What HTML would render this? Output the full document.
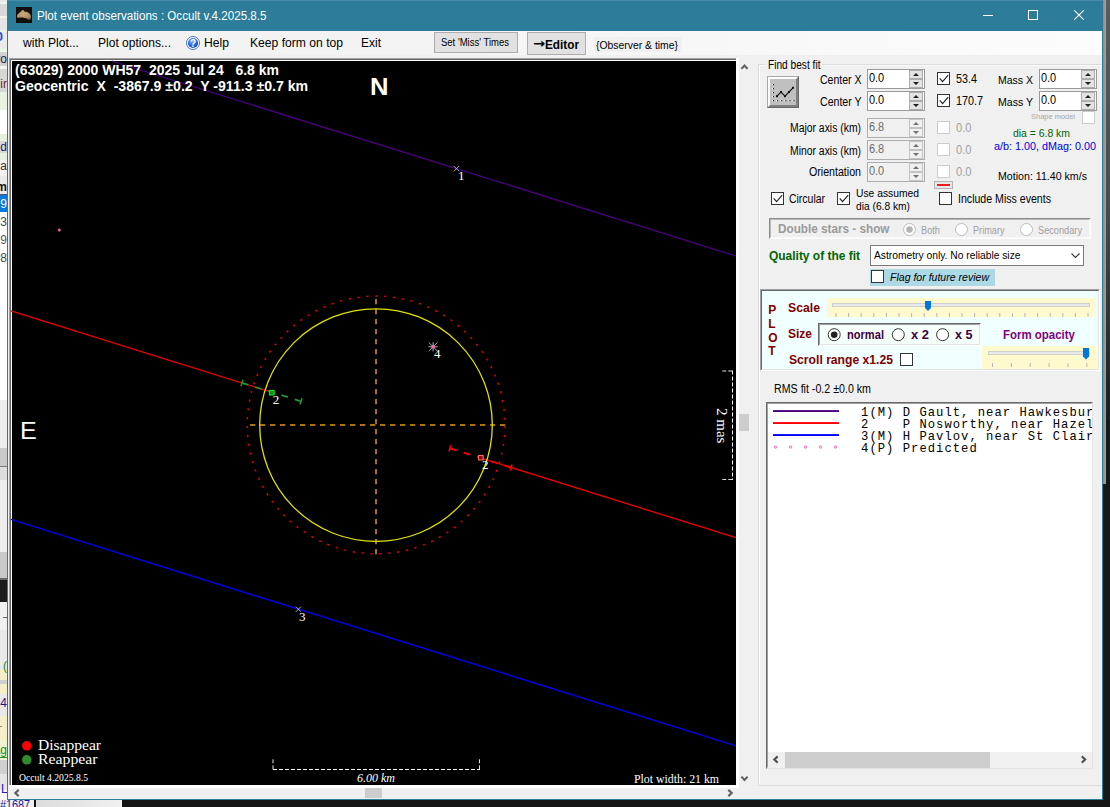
<!DOCTYPE html>
<html><head><meta charset="utf-8"><title>Plot event observations : Occult v.4.2025.8.5</title>
<style>
html,body{margin:0;padding:0;}
body{width:1110px;height:807px;overflow:hidden;background:#161616;position:relative;font-family:"Liberation Sans",Arial,sans-serif;}
div,span,svg{box-sizing:border-box;}
svg{position:absolute;overflow:visible;}
</style></head><body>
<div style="position:absolute;left:1103px;top:0px;width:7px;height:807px;background:#181818;"></div>
<div style="position:absolute;left:1103px;top:0px;width:3px;height:484px;background:linear-gradient(90deg,#8e8a8a,#a6a2a2);"></div>
<div style="position:absolute;left:1106px;top:0px;width:4px;height:420px;background:linear-gradient(180deg,#5c5c5c 0,#4a4a4a 50%,#1c1c1c 100%);"></div>
<div style="position:absolute;left:0px;top:800px;width:1110px;height:7px;background:#141414;"></div>
<div style="position:absolute;left:0;top:0;width:7px;height:800px;overflow:hidden;background:#ececec;">
<div style="position:absolute;left:0px;top:0px;width:7px;height:2px;background:#e8e8e8;"></div>
<div style="position:absolute;left:0px;top:2px;width:7px;height:2px;background:#eef6ea;"></div>
<div style="position:absolute;left:0px;top:4px;width:7px;height:12px;background:#d9d9d9;"></div>
<div style="position:absolute;left:0px;top:16px;width:7px;height:2px;background:#eef6ea;"></div>
<div style="position:absolute;left:0px;top:18px;width:7px;height:12px;background:#e4e4e4;"></div>
<div style="position:absolute;left:0px;top:30px;width:7px;height:2px;background:#e6f2e2;"></div>
<div style="position:absolute;left:0px;top:32px;width:7px;height:16px;background:#e9e9e9;"></div>
<div style="position:absolute;left:0px;top:48px;width:7px;height:2px;background:#e6f2e2;"></div>
<div style="position:absolute;left:0px;top:50px;width:7px;height:2px;background:#f4f4f4;"></div>
<div style="position:absolute;left:0px;top:52px;width:7px;height:14px;background:#d2d2d2;"></div>
<div style="position:absolute;left:0px;top:66px;width:7px;height:3px;background:#f2f6ee;"></div>
<div style="position:absolute;left:0px;top:69px;width:7px;height:23px;background:#d6d6d6;"></div>
<div style="position:absolute;left:0px;top:92px;width:7px;height:18px;background:#e9f1e3;"></div>
<div style="position:absolute;left:0px;top:110px;width:7px;height:24px;background:#ffffff;"></div>
<div style="position:absolute;left:0px;top:134px;width:7px;height:7px;background:#e6f0e0;"></div>
<div style="position:absolute;left:0px;top:141px;width:7px;height:12px;background:#d8d8d8;"></div>
<div style="position:absolute;left:0px;top:153px;width:7px;height:7px;background:#e6f0e0;"></div>
<div style="position:absolute;left:0px;top:160px;width:7px;height:16px;background:#f2f2f2;"></div>
<div style="position:absolute;left:0px;top:176px;width:7px;height:18px;background:#e9e9e9;"></div>
<div style="position:absolute;left:0px;top:194px;width:7px;height:1px;background:#555;"></div>
<div style="position:absolute;left:0px;top:195px;width:7px;height:17px;background:#0a78d7;"></div>
<div style="position:absolute;left:0px;top:212px;width:7px;height:188px;background:#ffffff;"></div>
<div style="position:absolute;left:0px;top:400px;width:7px;height:48px;background:#ededed;"></div>
<div style="position:absolute;left:0px;top:448px;width:7px;height:18px;background:#c9c9c9;"></div>
<div style="position:absolute;left:0px;top:466px;width:7px;height:1px;background:#7a7a7a;"></div>
<div style="position:absolute;left:0px;top:467px;width:7px;height:13px;background:#dedede;"></div>
<div style="position:absolute;left:0px;top:480px;width:7px;height:72px;background:#ededed;"></div>
<div style="position:absolute;left:0px;top:552px;width:7px;height:26px;background:#c9c9c9;"></div>
<div style="position:absolute;left:0px;top:578px;width:7px;height:2px;background:#6a6a6a;"></div>
<div style="position:absolute;left:0px;top:580px;width:7px;height:22px;background:#1c1c1c;"></div>
<div style="position:absolute;left:0px;top:602px;width:7px;height:28px;background:#f0f0f0;"></div>
<div style="position:absolute;left:0px;top:630px;width:7px;height:40px;background:#e9e9e9;"></div>
<div style="position:absolute;left:0px;top:670px;width:7px;height:10px;background:#f4efc6;"></div>
<div style="position:absolute;left:0px;top:680px;width:7px;height:4px;background:#cfcfcf;"></div>
<div style="position:absolute;left:0px;top:684px;width:7px;height:10px;background:#f4efc6;"></div>
<div style="position:absolute;left:0px;top:694px;width:7px;height:22px;background:#e8e8e8;"></div>
<div style="position:absolute;left:0px;top:716px;width:7px;height:24px;background:#f4efc6;"></div>
<div style="position:absolute;left:0px;top:740px;width:7px;height:20px;background:#eef2cf;"></div>
<div style="position:absolute;left:0px;top:760px;width:7px;height:14px;background:#cfcfcf;"></div>
<div style="position:absolute;left:0px;top:774px;width:7px;height:16px;background:#e4e4e4;"></div>
<div style="position:absolute;left:0px;top:790px;width:7px;height:10px;background:#fbfbfb;"></div>
<div style="position:absolute;left:3px;top:617px;width:4px;height:1px;background:#666;"></div>
<div style="position:absolute;left:0px;top:726px;width:2px;height:1px;background:#888;"></div>
<div style="position:absolute;left:0px;top:757px;width:7px;height:1px;background:#2e8b2e;"></div>
<span style="position:absolute;right:4px;top:29px;font:bold 13px/16px 'Liberation Sans', Arial, sans-serif;color:#1a4fd0;">0</span>
<span style="position:absolute;right:0;top:51px;font:normal 12px/16px 'Liberation Sans', Arial, sans-serif;color:#1a1a40;white-space:pre;">ro</span>
<span style="position:absolute;right:0;top:76px;font:normal 12px/16px 'Liberation Sans', Arial, sans-serif;color:#7a2a10;white-space:pre;">ir</span>
<span style="position:absolute;right:0;top:139px;font:normal 12px/16px 'Liberation Sans', Arial, sans-serif;color:#1a1a70;white-space:pre;">d</span>
<span style="position:absolute;right:0;top:158px;font:normal 12px/16px 'Liberation Sans', Arial, sans-serif;color:#4a2a10;white-space:pre;">a</span>
<span style="position:absolute;right:0;top:179px;font:bold 12px/16px 'Liberation Sans', Arial, sans-serif;color:#111;white-space:pre;">m</span>
<span style="position:absolute;right:0;top:196px;font:normal 12px/16px 'Liberation Sans', Arial, sans-serif;color:#fff;white-space:pre;">9</span>
<span style="position:absolute;right:0;top:214px;font:normal 12px/16px 'Liberation Sans', Arial, sans-serif;color:#444;white-space:pre;">33</span>
<span style="position:absolute;right:0;top:232px;font:normal 12px/16px 'Liberation Sans', Arial, sans-serif;color:#555;white-space:pre;">9</span>
<span style="position:absolute;right:0;top:250px;font:normal 12px/16px 'Liberation Sans', Arial, sans-serif;color:#444;white-space:pre;">98</span>
<span style="position:absolute;right:0;top:695px;font:normal 12px/16px 'Liberation Sans', Arial, sans-serif;color:#1a1a70;white-space:pre;">4</span>
<span style="position:absolute;right:0;top:742px;font:normal 12px/16px 'Liberation Sans', Arial, sans-serif;color:#1e8a1e;white-space:pre;">ag</span>
<span style="position:absolute;right:0;top:658px;font:normal 12px/16px 'Liberation Sans', Arial, sans-serif;color:#1e8a1e;white-space:pre;">(</span>
<span style="position:absolute;left:1px;top:782px;font:12px/14px 'Liberation Sans', Arial, sans-serif;color:#2020b0;">L</span>
</div>
<div style="position:absolute;left:0px;top:800px;width:122px;height:7px;background:linear-gradient(90deg,#f0f0f0 0,#f0f0f0 36px,#dcdcdc 37px,#f0f0f0 100%);"></div>
<div style="position:absolute;left:34px;top:800px;width:2px;height:7px;background:#111;"></div>
<span id="t1" style="position:absolute;left:0px;top:797.3px;font:normal 13px/16px 'Liberation Sans', Arial, sans-serif;color:#1a1a9a;white-space:pre;transform:scaleX(0.8297);transform-origin:0 0;">#1687</span>
<div style="position:absolute;left:7px;top:0px;width:1096px;height:800px;background:#f0f0f0;border:1px solid #2c7c9a;"></div>
<div style="position:absolute;left:7px;top:0px;width:1096px;height:31px;background:#2c7c9a;border-top:1px solid #468ba6;"></div>
<svg style="left:16px;top:7px" width="16" height="16" viewBox="0 0 16 16"><defs><radialGradient id="ag" cx=".45" cy=".4" r=".65"><stop offset="0" stop-color="#c9aa7c"/><stop offset=".7" stop-color="#b09066"/><stop offset="1" stop-color="#7a6244"/></radialGradient></defs><rect width="16" height="16" fill="#130e09"/><path d="M0.8 9.3 C1.2 8 1.8 7.2 2.5 6.6 C3.2 5.6 4 4.9 4.9 4.4 C5.5 3.6 6.2 3 6.8 3 C7.4 3 7.9 3.3 8.2 3.8 C8.5 4.2 8.7 4.8 9 5.2 C9.7 4.8 10.5 4.7 11.2 5 C12.1 5.3 12.8 5.9 13.4 6.6 C14.2 7.4 14.8 8.3 15 9.3 C15.2 10.1 15.1 10.9 14.8 11.5 C14.6 12.2 14.2 12.7 13.7 12.8 C13 12.9 12.3 12.7 11.7 12.3 C11.1 11.9 10.6 11.5 10.1 11.2 C9.5 10.9 8.8 10.9 8.2 10.9 C7.4 10.7 6.5 10.5 5.7 10.5 C4.8 10.5 3.9 10.7 3 10.8 C2.4 10.8 1.8 10.7 1.4 10.4 C1 10.1 0.8 9.7 0.8 9.3Z" fill="url(#ag)"/></svg>
<span id="title" style="position:absolute;left:37px;top:9.0px;font:normal 12px/15px 'Liberation Sans', Arial, sans-serif;color:#fff;white-space:pre;transform:scaleX(0.9673);transform-origin:0 0;">Plot event observations : Occult v.4.2025.8.5</span>
<svg style="left:975px;top:1px" width="128" height="30" viewBox="975 1 128 30" fill="none" stroke="#fff" stroke-width="1"><path d="M983 15.5H993"/><rect x="1028.5" y="10.5" width="9" height="9"/><path d="M1074.3 10.3L1083.7 19.7M1083.7 10.3L1074.3 19.7" stroke-width="1.1"/></svg>
<div style="position:absolute;left:8px;top:31px;width:1094px;height:24px;background:linear-gradient(90deg,#f1f1f1 0%,#f4f4f4 40%,#fcfcfc 100%);"></div>
<span id="m1" style="position:absolute;left:23px;top:35.5px;font:normal 12px/15px 'Liberation Sans', Arial, sans-serif;color:#000;white-space:pre;transform:scaleX(1.0116);transform-origin:0 0;">with Plot...</span>
<span id="m2" style="position:absolute;left:98px;top:35.5px;font:normal 12px/15px 'Liberation Sans', Arial, sans-serif;color:#000;white-space:pre;transform:scaleX(1.0039);transform-origin:0 0;">Plot options...</span>
<svg style="left:186px;top:36px" width="14" height="14" viewBox="0 0 14 14"><defs><radialGradient id="hg" cx=".4" cy=".3" r=".8"><stop offset="0" stop-color="#7fb0ff"/><stop offset=".6" stop-color="#2a62d8"/><stop offset="1" stop-color="#1a3fa0"/></radialGradient></defs><circle cx="7" cy="7" r="6.5" fill="#fff" stroke="#4a74d0" stroke-width="1"/><circle cx="7" cy="7" r="5.1" fill="url(#hg)"/><text x="7" y="10.6" text-anchor="middle" font-family="Liberation Sans,Arial,sans-serif" font-weight="bold" font-size="10" fill="#fff">?</text></svg>
<span id="m3" style="position:absolute;left:204px;top:35.5px;font:normal 12px/15px 'Liberation Sans', Arial, sans-serif;color:#000;white-space:pre;transform:scaleX(1.0127);transform-origin:0 0;">Help</span>
<span id="m4" style="position:absolute;left:250px;top:35.5px;font:normal 12px/15px 'Liberation Sans', Arial, sans-serif;color:#000;white-space:pre;transform:scaleX(1.0102);transform-origin:0 0;">Keep form on top</span>
<span id="m5" style="position:absolute;left:361px;top:35.5px;font:normal 12px/15px 'Liberation Sans', Arial, sans-serif;color:#000;white-space:pre;transform:scaleX(0.9992);transform-origin:0 0;">Exit</span>
<div style="position:absolute;left:434px;top:32px;width:84px;height:21px;background:#e1e1e1;border:1px solid #adadad;"></div>
<span id="b1" style="position:absolute;left:441px;top:36.5px;font:normal 10px/12px 'Liberation Sans', Arial, sans-serif;color:#000;white-space:pre;transform:scaleX(0.9496);transform-origin:0 0;">Set 'Miss' Times</span>
<div style="position:absolute;left:527px;top:32px;width:59px;height:23px;background:#e1e1e1;border:1px solid #adadad;"></div>
<span id="b2" style="position:absolute;left:533px;top:36.5px;font:bold 12px/15px 'Liberation Sans', Arial, sans-serif;color:#000;white-space:pre;"><span style="font:bold 13px/15px 'DejaVu Sans',sans-serif;display:inline-block;width:12px;transform:scaleX(1.1);transform-origin:0 50%;position:relative;top:-0.5px;">→</span><span style="display:inline-block;transform:scaleX(0.981);transform-origin:0 50%;">Editor</span></span>
<div style="position:absolute;left:594px;top:37px;width:88px;height:15px;background:#f0f0f0;"></div>
<span id="b3" style="position:absolute;left:596px;top:37.5px;font:normal 11px/14px 'Liberation Sans', Arial, sans-serif;color:#000;white-space:pre;transform:scaleX(0.9444);transform-origin:0 0;">{Observer &amp; time}</span>
<div style="position:absolute;left:9px;top:58px;width:745px;height:741px;background:#f0f0f0;"></div>
<div style="position:absolute;left:9px;top:58px;width:729px;height:729px;background:#000;border:1px solid #a0a0a0;border-right-color:#fff;border-bottom-color:#fff;"></div>
<div style="position:absolute;left:10px;top:59px;width:727px;height:727px;background:#000;border:1px solid #696969;border-right-color:#e3e3e3;border-bottom-color:#e3e3e3;"></div>
<div style="position:absolute;left:11px;top:60px;width:725px;height:725px;background:#000;border:1px solid #fff;border-right:none;border-bottom:none;"></div>
<svg style="left:12px;top:61px" width="724" height="724" viewBox="12 61 724 724"><line x1="111.6" y1="61" x2="736" y2="256.0" stroke="#4b0082" stroke-width="1.3"/><line x1="11" y1="310.8" x2="270" y2="391.7" stroke="#f00000" stroke-width="1.3"/><line x1="481" y1="458.1" x2="736" y2="537.7" stroke="#f00000" stroke-width="1.3"/><line x1="11" y1="519.4" x2="736" y2="745.9" stroke="#0000f0" stroke-width="1.4"/><line x1="250" y1="425" x2="505.3" y2="425" stroke="#aa7208" stroke-width="2" stroke-dasharray="5.25 4.75"/><line x1="376" y1="299" x2="376" y2="554.4" stroke="#aa7208" stroke-width="2" stroke-dasharray="5.25 4.75"/><circle cx="376.1" cy="425" r="128.9" fill="none" stroke="#e80000" stroke-width="1.5" stroke-dasharray="2.1 6.8" stroke-dashoffset="-1.17"/><circle cx="376" cy="425.1" r="116.3" fill="none" stroke="#e0e000" stroke-width="1.3"/><line x1="242.0" y1="382.9" x2="301.0" y2="401.3" stroke="#1e9632" stroke-width="1.8" stroke-dasharray="6.7 7.1"/><line x1="243.0" y1="379.8" x2="241.0" y2="386.0" stroke="#1e9632" stroke-width="1.6"/><line x1="302.0" y1="398.2" x2="300.0" y2="404.4" stroke="#1e9632" stroke-width="1.6"/><line x1="450.0" y1="448.4" x2="511.0" y2="467.5" stroke="#ff0000" stroke-width="1.8" stroke-dasharray="6.9 7.35"/><line x1="451.0" y1="445.3" x2="449.0" y2="451.5" stroke="#ff0000" stroke-width="1.6"/><line x1="512.0" y1="464.4" x2="510.0" y2="470.6" stroke="#ff0000" stroke-width="1.6"/><rect x="269.5" y="390.5" width="4.6" height="4.4" fill="#108a20" stroke="#00f000" stroke-width="1.1"/><rect x="478.5" y="455.5" width="4.6" height="4.4" fill="#8a0808" stroke="#ff6a5a" stroke-width="1.1"/><path d="M453.9 166.1L459.1 171.29999999999998M459.1 166.1L453.9 171.29999999999998" stroke="#b0b0b0" stroke-width="1" fill="none"/><path d="M295.79999999999995 606.6L301.0 611.8000000000001M301.0 606.6L295.79999999999995 611.8000000000001" stroke="#b0b0b0" stroke-width="1" fill="none"/><path d="M428.70000000000005 342.40000000000003L437.5 351.2M437.5 342.40000000000003L428.70000000000005 351.2M428.5 346.8H437.70000000000005M433.1 342.2V351.40000000000003" stroke="#c0c0c8" stroke-width="0.9" fill="none"/><circle cx="433.1" cy="346.8" r="1.8" fill="#ff69b4"/><circle cx="59.3" cy="230" r="1.5" fill="#e860a8"/><path d="M273 769.5H480" fill="none" stroke="#fff" stroke-width="1" stroke-dasharray="4 2"/><path d="M273 759.3V770M479.5 759.3V770" fill="none" stroke="#e0e0e0" stroke-width="1" stroke-dasharray="4 2"/><path d="M732.5 370.5V480" fill="none" stroke="#fff" stroke-width="1" stroke-dasharray="4 2"/><path d="M722.3 371H733M722.3 479.5H733" fill="none" stroke="#e0e0e0" stroke-width="1" stroke-dasharray="4 2"/><circle cx="26.8" cy="745.8" r="4.8" fill="#ff0000"/><circle cx="26.8" cy="759.8" r="4.8" fill="#2e8b2e"/></svg>
<span id="h1" style="position:absolute;left:15px;top:60.5px;font:bold 14px/18px 'Liberation Sans', Arial, sans-serif;color:#fff;white-space:pre;transform:scaleX(1.0006);transform-origin:0 0;">(63029) 2000 WH57  2025 Jul 24   6.8 km</span>
<span id="h2" style="position:absolute;left:15px;top:77.0px;font:bold 14px/18px 'Liberation Sans', Arial, sans-serif;color:#fff;white-space:pre;transform:scaleX(1.0064);transform-origin:0 0;">Geocentric  X  -3867.9 ±0.2  Y -911.3 ±0.7 km</span>
<span id="N" style="position:absolute;left:370px;top:73.0px;font:bold 23px/29px 'Liberation Sans', Arial, sans-serif;color:#fff;white-space:pre;transform:scaleX(1.1128);transform-origin:0 0;">N</span>
<span id="E" style="position:absolute;left:19.8px;top:417.0px;font:normal 23px/29px 'Liberation Sans', Arial, sans-serif;color:#fff;white-space:pre;transform:scaleX(1.0884);transform-origin:0 0;">E</span>
<span id="t14" style="position:absolute;left:458px;top:167.5px;font:normal 13px/16px 'Liberation Serif', 'Times New Roman', serif;color:#fff;white-space:pre;">1</span>
<span id="t15" style="position:absolute;left:299px;top:608.5px;font:normal 13px/16px 'Liberation Serif', 'Times New Roman', serif;color:#fff;white-space:pre;">3</span>
<span id="t16" style="position:absolute;left:272.8px;top:391.5px;font:normal 13px/16px 'Liberation Serif', 'Times New Roman', serif;color:#fff;white-space:pre;">2</span>
<span id="t17" style="position:absolute;left:482px;top:456.5px;font:normal 13px/16px 'Liberation Serif', 'Times New Roman', serif;color:#fff;white-space:pre;">2</span>
<span id="t18" style="position:absolute;left:434px;top:345.5px;font:normal 13px/16px 'Liberation Serif', 'Times New Roman', serif;color:#fff;white-space:pre;">4</span>
<span id="dis" style="position:absolute;left:37.5px;top:736.3px;font:normal 15px/19px 'Liberation Serif', 'Times New Roman', serif;color:#fff;white-space:pre;transform:scaleX(1.0360);transform-origin:0 0;">Disappear</span>
<span id="rea" style="position:absolute;left:37.5px;top:750.3px;font:normal 15px/19px 'Liberation Serif', 'Times New Roman', serif;color:#fff;white-space:pre;transform:scaleX(1.0505);transform-origin:0 0;">Reappear</span>
<span id="occ" style="position:absolute;left:19px;top:772.0px;font:normal 10px/12px 'Liberation Serif', 'Times New Roman', serif;color:#fff;white-space:pre;transform:scaleX(0.9629);transform-origin:0 0;">Occult 4.2025.8.5</span>
<span id="km" style="position:absolute;left:357px;top:770.5px;font:normal 12px/15px 'Liberation Serif', 'Times New Roman', serif;font-style:italic;color:#fff;white-space:pre;">6.00 km</span>
<span id="pw" style="position:absolute;left:634px;top:771.8px;font:normal 12px/15px 'Liberation Serif', 'Times New Roman', serif;color:#fff;white-space:pre;transform:scaleX(0.9844);transform-origin:0 0;">Plot width: 21 km</span>
<span id="mas" style="position:absolute;left:729px;top:407.8px;font:15px/15px 'Liberation Serif', 'Times New Roman', serif;color:#fff;white-space:pre;transform-origin:0 0;transform:rotate(90deg);">2 mas</span>
<div style="position:absolute;left:736px;top:58px;width:3px;height:730px;background:#fff;"></div>
<div style="position:absolute;left:9px;top:785px;width:730px;height:3px;background:#fff;"></div>
<div style="position:absolute;left:739px;top:58px;width:15px;height:728px;background:#f0f0f0;"></div>
<div style="position:absolute;left:739px;top:414px;width:10px;height:17px;background:#cdcdcd;"></div>
<svg style="left:0;top:0" width="1" height="1"><path d="M741.4 68.9L744.5 65.5L747.6 68.9" fill="none" stroke="#606060" stroke-width="2.1"/></svg>
<svg style="left:0;top:0" width="1" height="1"><path d="M741.4 776.5999999999999L744.5 780.0L747.6 776.5999999999999" fill="none" stroke="#606060" stroke-width="2.1"/></svg>
<div style="position:absolute;left:9px;top:788px;width:729px;height:11px;background:#f0f0f0;"></div>
<div style="position:absolute;left:365px;top:788px;width:17px;height:10px;background:#cdcdcd;"></div>
<svg style="left:0;top:0" width="1" height="1"><path d="M18.7 789.9L15.3 793L18.7 796.1" fill="none" stroke="#606060" stroke-width="2.1"/></svg>
<svg style="left:0;top:0" width="1" height="1"><path d="M728.3 789.9L731.7 793L728.3 796.1" fill="none" stroke="#606060" stroke-width="2.1"/></svg>
<div style="position:absolute;left:758px;top:64px;width:344px;height:722px;border:1px solid #dcdcdc;border-right:none;box-shadow:inset 1px 1px 0 #fbfbfb;"></div>
<div style="position:absolute;left:765px;top:58px;width:57px;height:14px;background:#f0f0f0;"></div>
<span id="fbf" style="position:absolute;left:767.5px;top:57.8px;font:normal 12px/15px 'Liberation Sans', Arial, sans-serif;color:#000;white-space:pre;transform:scaleX(0.8463);transform-origin:0 0;">Find best fit</span>
<div style="position:absolute;left:767px;top:76px;width:32px;height:32px;background:#c0c0c0;border:3px solid #fff;border-right-color:#808080;border-bottom-color:#808080;"></div>
<div style="position:absolute;left:767px;top:76px;width:32px;height:32px;border:1px solid #a8a8a8;border-right-color:#696969;border-bottom-color:#696969;"></div>
<svg style="left:0;top:0" width="1" height="1"><rect x="772" y="84" width="1" height="1.2" fill="#fff"/><rect x="773" y="84" width="1" height="1.2" fill="#222"/><rect x="772" y="88" width="1" height="1.2" fill="#fff"/><rect x="773" y="88" width="1" height="1.2" fill="#222"/><rect x="772" y="92" width="1" height="1.2" fill="#fff"/><rect x="773" y="92" width="1" height="1.2" fill="#222"/><rect x="772" y="96" width="1" height="1.2" fill="#fff"/><rect x="773" y="96" width="1" height="1.2" fill="#222"/><rect x="772" y="100" width="1" height="1.2" fill="#fff"/><rect x="773" y="100" width="1" height="1.2" fill="#222"/><rect x="776.1" y="100" width="1" height="1.2" fill="#fff"/><rect x="777.1" y="100" width="1" height="1.2" fill="#222"/><rect x="780.2" y="100" width="1" height="1.2" fill="#fff"/><rect x="781.2" y="100" width="1" height="1.2" fill="#222"/><rect x="784.3" y="100" width="1" height="1.2" fill="#fff"/><rect x="785.3" y="100" width="1" height="1.2" fill="#222"/><rect x="788.4" y="100" width="1" height="1.2" fill="#fff"/><rect x="789.4" y="100" width="1" height="1.2" fill="#222"/><rect x="792.5" y="100" width="1" height="1.2" fill="#fff"/><rect x="793.5" y="100" width="1" height="1.2" fill="#222"/><path d="M777 96.2L781 92L785 96.2L789 92L793 87.8" fill="none" stroke="#111" stroke-width="1.1"/><rect x="776" y="95.2" width="2" height="2" fill="#111"/><rect x="780" y="91" width="2" height="2" fill="#111"/><rect x="784" y="95.2" width="2" height="2" fill="#111"/><rect x="788" y="91" width="2" height="2" fill="#111"/><rect x="792" y="86.8" width="2" height="2" fill="#111"/></svg>
<span id="cx" style="position:absolute;left:819.5px;top:72.5px;font:normal 12px/15px 'Liberation Sans', Arial, sans-serif;color:#000;white-space:pre;transform:scaleX(0.8763);transform-origin:0 0;">Center X</span>
<span id="cy" style="position:absolute;left:819.5px;top:94.5px;font:normal 12px/15px 'Liberation Sans', Arial, sans-serif;color:#000;white-space:pre;transform:scaleX(0.8803);transform-origin:0 0;">Center Y</span>
<div style="position:absolute;left:867px;top:69px;width:58px;height:20px;background:#fff;border:1px solid #9a9a9a;"></div>
<div style="position:absolute;left:909px;top:70px;width:14px;height:9px;border:1px solid #adadad;background:#e3e3e3;"></div>
<div style="position:absolute;left:909px;top:79px;width:14px;height:9px;border:1px solid #adadad;background:#e3e3e3;"></div>
<svg style="left:0;top:0" width="1" height="1"><path d="M913 76L916 73L919 76Z M913 82L916 85L919 82Z" fill="#202020"/></svg>
<span id="ud867_69" style="position:absolute;left:869px;top:71.0px;font:normal 12px/15px 'Liberation Sans', Arial, sans-serif;color:#000;white-space:pre;transform:scaleX(0.9109);transform-origin:0 0;">0.0</span>
<div style="position:absolute;left:867px;top:91px;width:58px;height:20px;background:#fff;border:1px solid #9a9a9a;"></div>
<div style="position:absolute;left:909px;top:92px;width:14px;height:9px;border:1px solid #adadad;background:#e3e3e3;"></div>
<div style="position:absolute;left:909px;top:101px;width:14px;height:9px;border:1px solid #adadad;background:#e3e3e3;"></div>
<svg style="left:0;top:0" width="1" height="1"><path d="M913 98L916 95L919 98Z M913 104L916 107L919 104Z" fill="#202020"/></svg>
<span id="ud867_91" style="position:absolute;left:869px;top:93.0px;font:normal 12px/15px 'Liberation Sans', Arial, sans-serif;color:#000;white-space:pre;transform:scaleX(0.9109);transform-origin:0 0;">0.0</span>
<div style="position:absolute;left:937px;top:72px;width:13px;height:13px;background:#fff;border:1px solid #333333;"></div>
<svg style="left:0;top:0" width="1" height="1"><path d="M939.7 78.4L942.6 81.7L948.2 75.2" fill="none" stroke="#222" stroke-width="1.15"/></svg>
<div style="position:absolute;left:937px;top:94px;width:13px;height:13px;background:#fff;border:1px solid #333333;"></div>
<svg style="left:0;top:0" width="1" height="1"><path d="M939.7 100.4L942.6 103.7L948.2 97.2" fill="none" stroke="#222" stroke-width="1.15"/></svg>
<span id="v1" style="position:absolute;left:956px;top:71.5px;font:normal 12px/15px 'Liberation Sans', Arial, sans-serif;color:#000;white-space:pre;transform:scaleX(0.8990);transform-origin:0 0;">53.4</span>
<span id="v2" style="position:absolute;left:956px;top:93.5px;font:normal 12px/15px 'Liberation Sans', Arial, sans-serif;color:#000;white-space:pre;transform:scaleX(0.8991);transform-origin:0 0;">170.7</span>
<span id="mx" style="position:absolute;left:998px;top:73.0px;font:normal 11px/14px 'Liberation Sans', Arial, sans-serif;color:#000;white-space:pre;transform:scaleX(0.9540);transform-origin:0 0;">Mass X</span>
<span id="my" style="position:absolute;left:998px;top:95.0px;font:normal 11px/14px 'Liberation Sans', Arial, sans-serif;color:#000;white-space:pre;transform:scaleX(0.9593);transform-origin:0 0;">Mass Y</span>
<div style="position:absolute;left:1039px;top:69px;width:58px;height:20px;background:#fff;border:1px solid #9a9a9a;"></div>
<div style="position:absolute;left:1081px;top:70px;width:14px;height:9px;border:1px solid #adadad;background:#e3e3e3;"></div>
<div style="position:absolute;left:1081px;top:79px;width:14px;height:9px;border:1px solid #adadad;background:#e3e3e3;"></div>
<svg style="left:0;top:0" width="1" height="1"><path d="M1085 76L1088 73L1091 76Z M1085 82L1088 85L1091 82Z" fill="#202020"/></svg>
<span id="ud1039_69" style="position:absolute;left:1041px;top:71.0px;font:normal 12px/15px 'Liberation Sans', Arial, sans-serif;color:#000;white-space:pre;transform:scaleX(0.9109);transform-origin:0 0;">0.0</span>
<div style="position:absolute;left:1039px;top:91px;width:58px;height:20px;background:#fff;border:1px solid #9a9a9a;"></div>
<div style="position:absolute;left:1081px;top:92px;width:14px;height:9px;border:1px solid #adadad;background:#e3e3e3;"></div>
<div style="position:absolute;left:1081px;top:101px;width:14px;height:9px;border:1px solid #adadad;background:#e3e3e3;"></div>
<svg style="left:0;top:0" width="1" height="1"><path d="M1085 98L1088 95L1091 98Z M1085 104L1088 107L1091 104Z" fill="#202020"/></svg>
<span id="ud1039_91" style="position:absolute;left:1041px;top:93.0px;font:normal 12px/15px 'Liberation Sans', Arial, sans-serif;color:#000;white-space:pre;transform:scaleX(0.9109);transform-origin:0 0;">0.0</span>
<span id="sm" style="position:absolute;left:1031px;top:112.0px;font:normal 8px/10px 'Liberation Sans', Arial, sans-serif;color:#a8a8a8;white-space:pre;transform:scaleX(0.9331);transform-origin:0 0;">Shape model</span>
<div style="position:absolute;left:1082px;top:111px;width:13px;height:13px;background:#fff;border:1px solid #cccccc;"></div>
<span id="maj" style="position:absolute;left:790px;top:121.0px;font:normal 12px/15px 'Liberation Sans', Arial, sans-serif;color:#000;white-space:pre;transform:scaleX(0.8657);transform-origin:0 0;">Major axis (km)</span>
<span id="min" style="position:absolute;left:790px;top:143.5px;font:normal 12px/15px 'Liberation Sans', Arial, sans-serif;color:#000;white-space:pre;transform:scaleX(0.8657);transform-origin:0 0;">Minor axis (km)</span>
<span id="ori" style="position:absolute;left:809px;top:165.0px;font:normal 12px/15px 'Liberation Sans', Arial, sans-serif;color:#000;white-space:pre;transform:scaleX(0.8858);transform-origin:0 0;">Orientation</span>
<div style="position:absolute;left:867px;top:118px;width:58px;height:20px;background:#f0f0f0;border:1px solid #adadad;"></div>
<div style="position:absolute;left:909px;top:119px;width:14px;height:9px;border:1px solid #c4c4c4;background:#f0f0f0;"></div>
<div style="position:absolute;left:909px;top:128px;width:14px;height:9px;border:1px solid #c4c4c4;background:#f0f0f0;"></div>
<svg style="left:0;top:0" width="1" height="1"><path d="M913 125L916 122L919 125Z M913 131L916 134L919 131Z" fill="#707070"/></svg>
<span id="ud867_118" style="position:absolute;left:869px;top:120.0px;font:normal 12px/15px 'Liberation Sans', Arial, sans-serif;color:#6d6d6d;white-space:pre;transform:scaleX(0.9109);transform-origin:0 0;">6.8</span>
<div style="position:absolute;left:867px;top:140px;width:58px;height:20px;background:#f0f0f0;border:1px solid #adadad;"></div>
<div style="position:absolute;left:909px;top:141px;width:14px;height:9px;border:1px solid #c4c4c4;background:#f0f0f0;"></div>
<div style="position:absolute;left:909px;top:150px;width:14px;height:9px;border:1px solid #c4c4c4;background:#f0f0f0;"></div>
<svg style="left:0;top:0" width="1" height="1"><path d="M913 147L916 144L919 147Z M913 153L916 156L919 153Z" fill="#707070"/></svg>
<span id="ud867_140" style="position:absolute;left:869px;top:142.0px;font:normal 12px/15px 'Liberation Sans', Arial, sans-serif;color:#6d6d6d;white-space:pre;transform:scaleX(0.9109);transform-origin:0 0;">6.8</span>
<div style="position:absolute;left:867px;top:162px;width:58px;height:20px;background:#f0f0f0;border:1px solid #adadad;"></div>
<div style="position:absolute;left:909px;top:163px;width:14px;height:9px;border:1px solid #c4c4c4;background:#f0f0f0;"></div>
<div style="position:absolute;left:909px;top:172px;width:14px;height:9px;border:1px solid #c4c4c4;background:#f0f0f0;"></div>
<svg style="left:0;top:0" width="1" height="1"><path d="M913 169L916 166L919 169Z M913 175L916 178L919 175Z" fill="#707070"/></svg>
<span id="ud867_162" style="position:absolute;left:869px;top:164.0px;font:normal 12px/15px 'Liberation Sans', Arial, sans-serif;color:#6d6d6d;white-space:pre;transform:scaleX(0.9109);transform-origin:0 0;">0.0</span>
<div style="position:absolute;left:937px;top:121px;width:13px;height:13px;background:#fff;border:1px solid #cccccc;"></div>
<div style="position:absolute;left:937px;top:143px;width:13px;height:13px;background:#fff;border:1px solid #cccccc;"></div>
<div style="position:absolute;left:937px;top:165px;width:13px;height:13px;background:#fff;border:1px solid #cccccc;"></div>
<span id="g1" style="position:absolute;left:956px;top:120.80000000000001px;font:normal 12px/15px 'Liberation Sans', Arial, sans-serif;color:#a0a0a0;white-space:pre;transform:scaleX(0.9288);transform-origin:0 0;">0.0</span>
<span id="g2" style="position:absolute;left:956px;top:142.5px;font:normal 12px/15px 'Liberation Sans', Arial, sans-serif;color:#a0a0a0;white-space:pre;transform:scaleX(0.9288);transform-origin:0 0;">0.0</span>
<span id="g3" style="position:absolute;left:956px;top:164.5px;font:normal 12px/15px 'Liberation Sans', Arial, sans-serif;color:#a0a0a0;white-space:pre;transform:scaleX(0.9288);transform-origin:0 0;">0.0</span>
<span id="dia" style="position:absolute;left:1013px;top:125.5px;font:normal 11px/14px 'Liberation Sans', Arial, sans-serif;color:#006400;white-space:pre;transform:scaleX(0.9463);transform-origin:0 0;">dia = 6.8 km</span>
<span id="ab" style="position:absolute;left:994px;top:138.5px;font:normal 11px/14px 'Liberation Sans', Arial, sans-serif;color:#0000e0;white-space:pre;transform:scaleX(0.9811);transform-origin:0 0;">a/b: 1.00, dMag: 0.00</span>
<span id="mot" style="position:absolute;left:998px;top:168.5px;font:normal 11px/14px 'Liberation Sans', Arial, sans-serif;color:#000;white-space:pre;transform:scaleX(0.9661);transform-origin:0 0;">Motion: 11.40 km/s</span>
<div style="position:absolute;left:934px;top:181px;width:19px;height:8px;background:#e8e8e8;border:1px solid #b4b4b4;"></div>
<div style="position:absolute;left:937px;top:184px;width:13px;height:2px;background:#f01818;"></div>
<div style="position:absolute;left:771px;top:192px;width:13px;height:13px;background:#fff;border:1px solid #333333;"></div>
<svg style="left:0;top:0" width="1" height="1"><path d="M773.7 198.4L776.6 201.7L782.2 195.2" fill="none" stroke="#222" stroke-width="1.15"/></svg>
<span id="circ" style="position:absolute;left:789px;top:192.0px;font:normal 12px/15px 'Liberation Sans', Arial, sans-serif;color:#000;white-space:pre;transform:scaleX(0.8707);transform-origin:0 0;">Circular</span>
<div style="position:absolute;left:837px;top:192px;width:13px;height:13px;background:#fff;border:1px solid #333333;"></div>
<svg style="left:0;top:0" width="1" height="1"><path d="M839.7 198.4L842.6 201.7L848.2 195.2" fill="none" stroke="#222" stroke-width="1.15"/></svg>
<span id="ua1" style="position:absolute;left:856px;top:186.0px;font:normal 11px/14px 'Liberation Sans', Arial, sans-serif;color:#000;white-space:pre;transform:scaleX(0.9366);transform-origin:0 0;">Use assumed</span>
<span id="ua2" style="position:absolute;left:856px;top:199.0px;font:normal 11px/14px 'Liberation Sans', Arial, sans-serif;color:#000;white-space:pre;transform:scaleX(0.9298);transform-origin:0 0;">dia (6.8 km)</span>
<div style="position:absolute;left:939px;top:192px;width:13px;height:13px;background:#fff;border:1px solid #333333;"></div>
<span id="ime" style="position:absolute;left:958px;top:192.0px;font:normal 12px/15px 'Liberation Sans', Arial, sans-serif;color:#000;white-space:pre;transform:scaleX(0.8824);transform-origin:0 0;">Include Miss events</span>
<div style="position:absolute;left:769px;top:218px;width:322px;height:21px;background:#f0f0f0;border:1px solid #8c8c8c;border-right-color:#fff;border-bottom-color:#fff;"></div>
<div style="position:absolute;left:770px;top:219px;width:320px;height:19px;border:1px solid #b8b8b8;border-right-color:#f8f8f8;border-bottom-color:#f8f8f8;"></div>
<span id="ds" style="position:absolute;left:777.5px;top:221.5px;font:bold 12px/15px 'Liberation Sans', Arial, sans-serif;color:#9a9a9a;white-space:pre;transform:scaleX(0.9778);transform-origin:0 0;">Double stars - show</span>
<svg style="left:0;top:0" width="1" height="1"><circle cx="909.5" cy="229.5" r="6" fill="#fff" stroke="#bcbcbc" stroke-width="1"/><circle cx="909.5" cy="229.5" r="3.3" fill="#b4b4b4"/></svg>
<span id="r1" style="position:absolute;left:921px;top:224.8px;font:normal 10px/12px 'Liberation Sans', Arial, sans-serif;color:#a0a0a0;white-space:pre;transform:scaleX(0.9233);transform-origin:0 0;">Both</span>
<svg style="left:0;top:0" width="1" height="1"><circle cx="961.5" cy="229.5" r="6" fill="#fff" stroke="#bcbcbc" stroke-width="1"/></svg>
<span id="r2" style="position:absolute;left:973px;top:224.8px;font:normal 10px/12px 'Liberation Sans', Arial, sans-serif;color:#a0a0a0;white-space:pre;transform:scaleX(0.9143);transform-origin:0 0;">Primary</span>
<svg style="left:0;top:0" width="1" height="1"><circle cx="1026.5" cy="229.5" r="6" fill="#fff" stroke="#bcbcbc" stroke-width="1"/></svg>
<span id="r3" style="position:absolute;left:1038px;top:224.8px;font:normal 10px/12px 'Liberation Sans', Arial, sans-serif;color:#a0a0a0;white-space:pre;transform:scaleX(0.9203);transform-origin:0 0;">Secondary</span>
<span id="qf" style="position:absolute;left:769px;top:248.5px;font:bold 12px/15px 'Liberation Sans', Arial, sans-serif;color:#006400;white-space:pre;transform:scaleX(0.9962);transform-origin:0 0;">Quality of the fit</span>
<div style="position:absolute;left:870px;top:245px;width:214px;height:21px;background:#fff;border:1px solid #7a7a7a;"></div>
<span id="cb" style="position:absolute;left:873.5px;top:247.5px;font:normal 11px/14px 'Liberation Sans', Arial, sans-serif;color:#000;white-space:pre;transform:scaleX(0.9337);transform-origin:0 0;">Astrometry only. No reliable size</span>
<svg style="left:0;top:0" width="1" height="1"><path d="M1071.5 253.5L1075.5 257.5L1079.5 253.5" fill="none" stroke="#333" stroke-width="1.1"/></svg>
<div style="position:absolute;left:870px;top:269px;width:125px;height:17px;background:#add8e6;"></div>
<div style="position:absolute;left:870.5px;top:270px;width:13px;height:13px;background:#fff;border:1px solid #333333;"></div>
<span id="ff" style="position:absolute;left:889.5px;top:269.5px;font:normal 11px/14px 'Liberation Sans', Arial, sans-serif;font-style:italic;color:#000;white-space:pre;transform:scaleX(0.9581);transform-origin:0 0;">Flag for future review</span>
<div style="position:absolute;left:760px;top:289px;width:340px;height:82px;background:#f0ffff;border:1px solid #a0a0a0;border-right-color:#fff;border-bottom-color:#fff;"></div>
<div style="position:absolute;left:761px;top:290px;width:338px;height:80px;border:1px solid #696969;border-right-color:#e3e3e3;border-bottom-color:#e3e3e3;"></div>
<span id="t59" style="position:absolute;left:768.3px;top:303.0px;font:bold 12px/15px 'Liberation Sans', Arial, sans-serif;color:#800000;white-space:pre;">P</span>
<span id="t60" style="position:absolute;left:768.3px;top:317.0px;font:bold 12px/15px 'Liberation Sans', Arial, sans-serif;color:#800000;white-space:pre;">L</span>
<span id="t61" style="position:absolute;left:768.3px;top:330.5px;font:bold 12px/15px 'Liberation Sans', Arial, sans-serif;color:#800000;white-space:pre;">O</span>
<span id="t62" style="position:absolute;left:768.3px;top:344.0px;font:bold 12px/15px 'Liberation Sans', Arial, sans-serif;color:#800000;white-space:pre;">T</span>
<span id="sc" style="position:absolute;left:788px;top:300.5px;font:bold 12px/15px 'Liberation Sans', Arial, sans-serif;color:#800000;white-space:pre;transform:scaleX(1.0204);transform-origin:0 0;">Scale</span>
<span id="sz" style="position:absolute;left:788px;top:327.0px;font:bold 12px/15px 'Liberation Sans', Arial, sans-serif;color:#800000;white-space:pre;transform:scaleX(0.9993);transform-origin:0 0;">Size</span>
<span id="sr" style="position:absolute;left:789px;top:352.5px;font:bold 12px/15px 'Liberation Sans', Arial, sans-serif;color:#800000;white-space:pre;transform:scaleX(1.0123);transform-origin:0 0;">Scroll range x1.25</span>
<div style="position:absolute;left:900px;top:353px;width:13px;height:13px;background:#fff;border:1px solid #333333;"></div>
<div style="position:absolute;left:827px;top:298px;width:269px;height:19px;background:#fffacd;"></div>
<div style="position:absolute;left:832px;top:303px;width:258px;height:4px;background:#e7eaea;border:1px solid #d0d0d0;"></div>
<svg style="left:0;top:0" width="1" height="1"><rect x="835.5" y="313" width="1" height="4" fill="#b4b4b4"/><rect x="848.1" y="313" width="1" height="4" fill="#b4b4b4"/><rect x="860.7" y="313" width="1" height="4" fill="#b4b4b4"/><rect x="873.3" y="313" width="1" height="4" fill="#b4b4b4"/><rect x="885.9" y="313" width="1" height="4" fill="#b4b4b4"/><rect x="898.5" y="313" width="1" height="4" fill="#b4b4b4"/><rect x="911.1" y="313" width="1" height="4" fill="#b4b4b4"/><rect x="923.7" y="313" width="1" height="4" fill="#b4b4b4"/><rect x="936.3" y="313" width="1" height="4" fill="#b4b4b4"/><rect x="948.9" y="313" width="1" height="4" fill="#b4b4b4"/><rect x="961.5" y="313" width="1" height="4" fill="#b4b4b4"/><rect x="974.1" y="313" width="1" height="4" fill="#b4b4b4"/><rect x="986.7" y="313" width="1" height="4" fill="#b4b4b4"/><rect x="999.3" y="313" width="1" height="4" fill="#b4b4b4"/><rect x="1011.9" y="313" width="1" height="4" fill="#b4b4b4"/><rect x="1024.5" y="313" width="1" height="4" fill="#b4b4b4"/><rect x="1037.1" y="313" width="1" height="4" fill="#b4b4b4"/><rect x="1049.7" y="313" width="1" height="4" fill="#b4b4b4"/><rect x="1062.3" y="313" width="1" height="4" fill="#b4b4b4"/><rect x="1074.9" y="313" width="1" height="4" fill="#b4b4b4"/><rect x="1087.5" y="313" width="1" height="4" fill="#b4b4b4"/><path d="M925 301H931V308L928 311L925 308Z" fill="#0078d7"/></svg>
<div style="position:absolute;left:818px;top:323px;width:163px;height:23px;background:#f5fffa;border:1px solid #696969;border-right-color:#fff;border-bottom-color:#fff;"></div>
<div style="position:absolute;left:819px;top:324px;width:161px;height:21px;border:1px solid #a0a0a0;border-right-color:#e3e3e3;border-bottom-color:#e3e3e3;"></div>
<svg style="left:0;top:0" width="1" height="1"><circle cx="834.2" cy="334.7" r="6" fill="#fff" stroke="#333" stroke-width="1"/><circle cx="834.2" cy="334.7" r="3.3" fill="#222"/></svg>
<span id="s1" style="position:absolute;left:846.5px;top:327.5px;font:bold 12px/15px 'Liberation Sans', Arial, sans-serif;color:#400040;white-space:pre;transform:scaleX(0.9246);transform-origin:0 0;">normal</span>
<svg style="left:0;top:0" width="1" height="1"><circle cx="898.3" cy="334.7" r="6" fill="#fff" stroke="#333" stroke-width="1"/></svg>
<span id="s2" style="position:absolute;left:910.5px;top:327.5px;font:bold 12px/15px 'Liberation Sans', Arial, sans-serif;color:#400040;white-space:pre;transform:scaleX(1.0787);transform-origin:0 0;">x 2</span>
<svg style="left:0;top:0" width="1" height="1"><circle cx="942.6" cy="334.7" r="6" fill="#fff" stroke="#333" stroke-width="1"/></svg>
<span id="s3" style="position:absolute;left:955px;top:327.5px;font:bold 12px/15px 'Liberation Sans', Arial, sans-serif;color:#400040;white-space:pre;transform:scaleX(1.0487);transform-origin:0 0;">x 5</span>
<span id="fo" style="position:absolute;left:1003px;top:327.5px;font:bold 12px/15px 'Liberation Sans', Arial, sans-serif;color:#800080;white-space:pre;transform:scaleX(0.9554);transform-origin:0 0;">Form opacity</span>
<div style="position:absolute;left:982px;top:346px;width:115px;height:23px;background:#fffacd;"></div>
<div style="position:absolute;left:988px;top:351px;width:102px;height:4px;background:#e7eaea;border:1px solid #d0d0d0;"></div>
<svg style="left:0;top:0" width="1" height="1"><rect x="992.0" y="363" width="1" height="4" fill="#b4b4b4"/><rect x="1010.9" y="363" width="1" height="4" fill="#b4b4b4"/><rect x="1029.7" y="363" width="1" height="4" fill="#b4b4b4"/><rect x="1048.6" y="363" width="1" height="4" fill="#b4b4b4"/><rect x="1067.5" y="363" width="1" height="4" fill="#b4b4b4"/><rect x="1086.3" y="363" width="1" height="4" fill="#b4b4b4"/><path d="M1083 348H1089V356.5L1086 359.5L1083 356.5Z" fill="#0078d7"/></svg>
<span id="rms" style="position:absolute;left:774px;top:382.0px;font:normal 12px/15px 'Liberation Sans', Arial, sans-serif;color:#000;white-space:pre;transform:scaleX(0.8876);transform-origin:0 0;">RMS fit -0.2 ±0.0 km</span>
<div style="position:absolute;left:766px;top:402px;width:327px;height:367px;background:#fff;border:1px solid #696969;border-right-color:#e3e3e3;border-bottom-color:#e3e3e3;"></div>
<div style="position:absolute;left:767px;top:403px;width:325px;height:365px;border:1px solid #a0a0a0;border-right-color:#fff;border-bottom-color:#fff;"></div>
<svg style="left:0;top:0" width="1" height="1"><rect x="773" y="410.1" width="66" height="1.9" fill="#4b0082"/><rect x="773" y="422.1" width="66" height="1.9" fill="#ff0000"/><rect x="773" y="434.1" width="66" height="1.9" fill="#0000ff"/><circle cx="775.5" cy="447" r="1.25" fill="#ffd0e8" stroke="#ff70b8" stroke-width="0.9"/><circle cx="790.5" cy="447" r="1.25" fill="#ffd0e8" stroke="#ff70b8" stroke-width="0.9"/><circle cx="805.5" cy="447" r="1.25" fill="#ffd0e8" stroke="#ff70b8" stroke-width="0.9"/><circle cx="820.5" cy="447" r="1.25" fill="#ffd0e8" stroke="#ff70b8" stroke-width="0.9"/><circle cx="835.5" cy="447" r="1.25" fill="#ffd0e8" stroke="#ff70b8" stroke-width="0.9"/></svg>
<div style="position:absolute;left:768px;top:404px;width:324px;height:60px;overflow:hidden;">
<span style="position:absolute;left:76.4px;top:3.2px;letter-spacing:1.02px;font:12.2px/13px 'Liberation Mono', 'Courier New', monospace;color:#000;white-space:pre;">  1(M) D Gault, near Hawkesbur</span>
<span style="position:absolute;left:76.4px;top:15.2px;letter-spacing:1.02px;font:12.2px/13px 'Liberation Mono', 'Courier New', monospace;color:#000;white-space:pre;">  2    P Nosworthy, near Hazel</span>
<span style="position:absolute;left:76.4px;top:27.2px;letter-spacing:1.02px;font:12.2px/13px 'Liberation Mono', 'Courier New', monospace;color:#000;white-space:pre;">  3(M) H Pavlov, near St Clair</span>
<span style="position:absolute;left:76.4px;top:39.2px;letter-spacing:1.02px;font:12.2px/13px 'Liberation Mono', 'Courier New', monospace;color:#000;white-space:pre;">  4(P) Predicted</span>
</div>
<div style="position:absolute;left:768px;top:752px;width:324px;height:16px;background:#f0f0f0;"></div>
<div style="position:absolute;left:785px;top:752px;width:205px;height:16px;background:#cdcdcd;"></div>
<svg style="left:0;top:0" width="1" height="1"><path d="M777.7 756.4L774.3 759.5L777.7 762.6" fill="none" stroke="#505050" stroke-width="2.1"/></svg>
<svg style="left:0;top:0" width="1" height="1"><path d="M1081.8 756.4L1085.2 759.5L1081.8 762.6" fill="none" stroke="#505050" stroke-width="2.1"/></svg>
</body></html>
